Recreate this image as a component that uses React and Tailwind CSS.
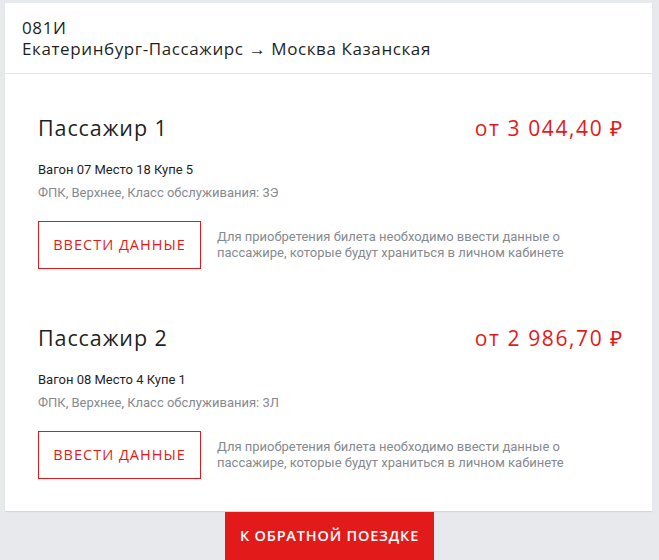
const passengers = [
  { title: 'Пассажир 1', price: 'от 3 044,40 ₽', seat: 'Вагон 07 Место 18 Купе 5', info: 'ФПК, Верхнее, Класс обслуживания: 3Э' },
  { title: 'Пассажир 2', price: 'от 2 986,70 ₽', seat: 'Вагон 08 Место 4 Купе 1', info: 'ФПК, Верхнее, Класс обслуживания: 3Л' },
];

function Passenger({ title, price, seat, info }) {
  return (
    <div className="flex flex-col">
      <div className="flex items-center justify-between font-['Open_Sans',sans-serif]">
        <h3 className="text-[21.5px] leading-[30px] tracking-[0.9px] text-[#1f1f1f]">{title}</h3>
        <span className="text-[21px] leading-[30px] tracking-[1.6px] text-[#e21a1a]">{price}</span>
      </div>
      <p className="mt-[17px] text-[13px] leading-[20px] text-[#1f1f1f]">{seat}</p>
      <p className="mt-[3px] text-[13px] leading-[20px] text-[#868a90]">{info}</p>
      <div className="mt-[18px] flex items-center gap-4">
        <button className="w-[163px] h-[48px] shrink-0 border border-[#e21a1a] font-['Open_Sans',sans-serif] text-[14.5px] tracking-[1px] text-[#e21a1a]">
          ВВЕСТИ ДАННЫЕ
        </button>
        <p className="text-[13px] leading-[16px] text-[#868a90]">
          Для приобретения билета необходимо ввести данные о<br />
          пассажире, которые будут храниться в личном кабинете
        </p>
      </div>
    </div>
  );
}

export default function App() {
  return (
    <div className="min-h-[560px] bg-[#e8e9ed] pt-[3px] font-['Roboto',sans-serif]">
      <div className="mx-[5px] mr-[7px] bg-white shadow-[0_1px_1px_rgba(0,0,0,0.08)]">
        <div className="px-[17px] pt-[14px] pb-[14px] border-b border-[#e3e4e6] font-['Open_Sans',sans-serif] text-[17px] leading-[21px] tracking-[0.6px] text-[#1f1f1f]">
          <div>081И</div>
          <div>Екатеринбург-Пассажирс → Москва Казанская</div>
        </div>
        <div className="pl-[33px] pr-[28px] pt-[39px] pb-[32px] flex flex-col gap-[54px]">
          {passengers.map((p) => (
            <Passenger key={p.title} {...p} />
          ))}
        </div>
      </div>
      <div className="flex justify-center">
        <button className="mt-px w-[209px] h-[48px] bg-[#e21a1a] font-['Open_Sans',sans-serif] text-white text-[14.5px] font-semibold tracking-[0.8px]">
          К ОБРАТНОЙ ПОЕЗДКЕ
        </button>
      </div>
    </div>
  );
}
